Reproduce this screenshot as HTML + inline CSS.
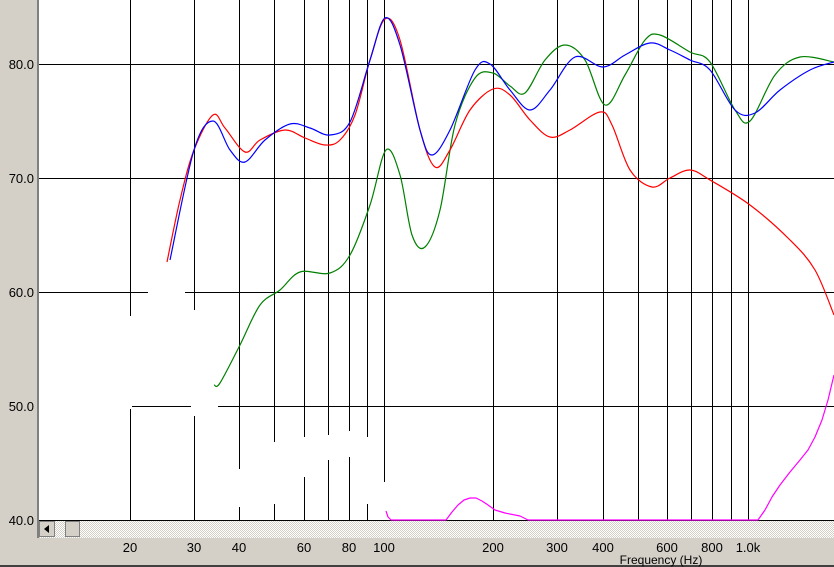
<!DOCTYPE html><html><head><style>
body{margin:0;width:834px;height:567px;overflow:hidden;background:#d4d0c8;font-family:"Liberation Sans",sans-serif}
</style></head><body>
<svg id="s" width="834" height="567" xmlns="http://www.w3.org/2000/svg" style="position:absolute;left:0;top:0">
<defs><pattern id="h" width="2" height="2" patternUnits="userSpaceOnUse"><rect width="2" height="2" fill="#fff"/><rect width="1" height="1" fill="#d4d0c8"/><rect x="1" y="1" width="1" height="1" fill="#d4d0c8"/></pattern></defs>
<rect x="0" y="0" width="834" height="567" fill="#d4d0c8"/>
<rect x="37" y="0" width="2" height="538" fill="#808080"/>
<rect x="39" y="0" width="795" height="520" fill="#fff"/>
<g stroke="#000" stroke-width="1" shape-rendering="crispEdges">
<line x1="39" y1="64.5" x2="834" y2="64.5"/><line x1="39" y1="178.5" x2="834" y2="178.5"/>
<line x1="39" y1="292.5" x2="148" y2="292.5"/><line x1="185" y1="292.5" x2="834" y2="292.5"/>
<line x1="132" y1="406.5" x2="191" y2="406.5"/><line x1="218" y1="406.5" x2="834" y2="406.5"/>
<line x1="39" y1="520.5" x2="834" y2="520.5"/>
<line x1="130.5" y1="0" x2="130.5" y2="316"/><line x1="130.5" y1="409" x2="130.5" y2="520"/>
<line x1="194.5" y1="0" x2="194.5" y2="310"/><line x1="194.5" y1="416" x2="194.5" y2="520"/>
<line x1="239.5" y1="0" x2="239.5" y2="469"/><line x1="239.5" y1="507" x2="239.5" y2="520"/>
<line x1="274.5" y1="0" x2="274.5" y2="442"/><line x1="274.5" y1="504" x2="274.5" y2="520"/>
<line x1="304.5" y1="0" x2="304.5" y2="437"/><line x1="304.5" y1="477" x2="304.5" y2="520"/>
<line x1="328.5" y1="0" x2="328.5" y2="435"/><line x1="328.5" y1="460" x2="328.5" y2="520"/>
<line x1="349.5" y1="0" x2="349.5" y2="431"/><line x1="349.5" y1="457" x2="349.5" y2="520"/>
<line x1="367.5" y1="0" x2="367.5" y2="437"/><line x1="367.5" y1="504" x2="367.5" y2="520"/>
<line x1="384.5" y1="0" x2="384.5" y2="482"/>
<line x1="493.5" y1="0" x2="493.5" y2="520"/><line x1="557.5" y1="0" x2="557.5" y2="520"/><line x1="603.5" y1="0" x2="603.5" y2="520"/><line x1="638.5" y1="0" x2="638.5" y2="520"/><line x1="667.5" y1="0" x2="667.5" y2="520"/><line x1="691.5" y1="0" x2="691.5" y2="520"/><line x1="712.5" y1="0" x2="712.5" y2="520"/><line x1="731.5" y1="0" x2="731.5" y2="520"/><line x1="748.5" y1="0" x2="748.5" y2="520"/>
</g>
<polyline fill="none" stroke="#f0f" stroke-width="1.2" stroke-linejoin="round" points="386,511 388,517 391,520 446,520 452,512 458,505 464,500 470,498 476,498 482,501 488,505 495,510 505,513 520,516 528,520 758,520 765,510 772,497 780,485 790,472 800,460 808,450 815,437 822,420 828,400 834,375"/>
<g id="c" fill="none" stroke-width="1.2" stroke-linejoin="round">
<polyline stroke="#008000" points="214,385 220,383 240,345 260,305 280,290 300,272 330,273 350,255 370,205 386,150 400,175 412,235 425,247 440,210 455,125 475,78 493,73 510,86 525,93 545,60 565,45 585,60 605,105 625,75 645,40 660,35 690,52 710,62 735,110 750,121 775,75 800,57 834,62"/>
<polyline stroke="#f00" points="167,262 180,200 194,150 213,115 225,128 245,152 260,140 285,130 305,138 325,145 340,140 355,115 370,60 385,19 400,40 420,130 435,167 450,150 470,110 493,89 510,95 530,120 550,137 570,130 600,112 612,125 630,170 652,187 670,178 690,170 710,180 750,205 790,240 815,270 834,315"/>
<polyline stroke="#00f" points="170,260 194,150 213,121 230,150 245,162 265,140 290,124 310,128 330,135 350,122 370,60 385,18 400,45 420,130 432,155 450,130 475,70 490,64 510,90 530,110 550,90 575,57 603,67 625,55 650,43 670,50 690,60 710,70 735,110 755,113 780,90 810,70 834,62"/>
</g>
<rect x="39" y="521" width="795" height="17" fill="url(#h)"/>
<rect x="39.5" y="521.5" width="15" height="15" fill="#d4d0c8" stroke="#808080"/>
<polygon points="44,529 49,525 49,533" fill="#000"/>
<rect x="65.5" y="521.5" width="14" height="15" fill="#d4d0c8" stroke="#808080"/>
<rect x="0" y="565" width="834" height="2" fill="#404040"/>
<g font-size="13" fill="#000" text-anchor="end">
<text x="34" y="69">80.0</text><text x="34" y="183">70.0</text><text x="34" y="297">60.0</text><text x="34" y="411">50.0</text><text x="34" y="525">40.0</text>
</g>
<g font-size="13" fill="#000" text-anchor="middle">
<text x="130" y="552">20</text><text x="194" y="552">30</text><text x="239" y="552">40</text><text x="304" y="552">60</text><text x="349" y="552">80</text><text x="384" y="552">100</text><text x="493" y="552">200</text><text x="557" y="552">300</text><text x="603" y="552">400</text><text x="667" y="552">600</text><text x="712" y="552">800</text><text x="748" y="552">1.0k</text>
<text x="661" y="564" font-size="12">Frequency (Hz)</text>
</g>
</svg>
<script>
document.querySelectorAll('#c polyline').forEach(function(pl){
 var p=pl.getAttribute('points').trim().split(/\s+/).map(function(s){return s.split(',').map(Number)});
 var d='M'+p[0][0]+','+p[0][1];
 for(var i=0;i<p.length-1;i++){
  var a=p[Math.max(i-1,0)],b=p[i],c=p[i+1],e=p[Math.min(i+2,p.length-1)];
  var c1=[b[0]+(c[0]-a[0])/6,b[1]+(c[1]-a[1])/6],c2=[c[0]-(e[0]-b[0])/6,c[1]-(e[1]-b[1])/6];
  d+=' C'+c1+' '+c2+' '+c;
 }
 var path=document.createElementNS('http://www.w3.org/2000/svg','path');
 path.setAttribute('d',d);path.setAttribute('stroke',pl.getAttribute('stroke'));
 pl.parentNode.replaceChild(path,pl);
});
</script>
</body></html>
